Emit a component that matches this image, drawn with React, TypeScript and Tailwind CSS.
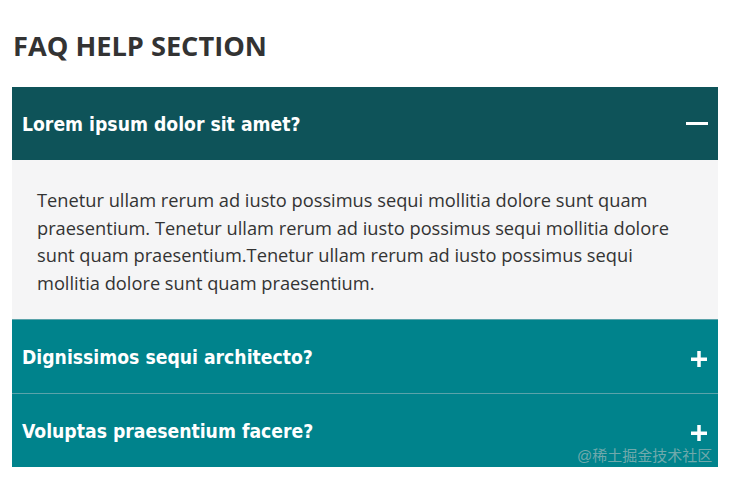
import React, { useState } from "react";

const items = [
  {
    q: "Lorem ipsum dolor sit amet?",
    a: "Tenetur ullam rerum ad iusto possimus sequi mollitia dolore sunt quam praesentium. Tenetur ullam rerum ad iusto possimus sequi mollitia dolore sunt quam praesentium.Tenetur ullam rerum ad iusto possimus sequi mollitia dolore sunt quam praesentium.",
  },
  { q: "Dignissimos sequi architecto?", a: "Tenetur ullam rerum ad iusto possimus sequi mollitia dolore sunt quam praesentium." },
  { q: "Voluptas praesentium facere?", a: "Tenetur ullam rerum ad iusto possimus sequi mollitia dolore sunt quam praesentium." },
];

export default function App() {
  const [open, setOpen] = useState(0);
  return (
    <div className="relative w-[730px] h-[481px] bg-white overflow-hidden">
      <div className="pl-[12px] pr-[12px] pt-[29px]">
        <h1 className="text-[27.2px] font-bold text-[#333333] leading-[34px] pl-[1px] mb-[24px]" style={{ fontFamily: '"Open Sans", sans-serif' }}>
          FAQ HELP SECTION
        </h1>
        <div className="flex flex-col">
          {items.map((it, i) => {
            const isOpen = open === i;
            return (
              <div key={i} className={i > 0 ? "border-t border-[#5aa3aa]" : ""}>
                <button
                  onClick={() => setOpen(isOpen ? -1 : i)}
                  className={`w-full h-[73px] flex items-center justify-between pl-[10px] pr-[10px] text-left text-white ${isOpen ? "bg-[#0e5359]" : "bg-[#00838c]"}`}
                >
                  <span className="text-[19.2px] font-bold pt-[4px]" style={{ fontFamily: '"DejaVu Sans Condensed", "DejaVu Sans", sans-serif' }}>
                    {it.q}
                  </span>
                  <span className="w-[22px] h-[22px] relative flex items-center justify-center">
                    {isOpen ? (
                      <span className="block w-[22px] h-[3px] bg-white" />
                    ) : (
                      <svg width="16" height="16" viewBox="0 0 16 16" className="ml-[4px] mt-[4px]">
                        <rect x="0" y="6.5" width="16" height="3.5" fill="#fff" />
                        <rect x="6.25" y="0" width="3.5" height="16" fill="#fff" />
                      </svg>
                    )}
                  </span>
                </button>
                {isOpen && (
                  <div className="bg-[#f5f5f6] pl-[25px] pr-[26px] pt-[26px] pb-[23px]">
                    <p className="text-[18.25px] leading-[27.5px] text-[#333333]" style={{ fontFamily: '"Open Sans", sans-serif' }}>
                      {it.a}
                    </p>
                  </div>
                )}
              </div>
            );
          })}
        </div>
      </div>
      <div
        className="absolute left-[577px] top-[445px] text-[15px] text-[rgba(190,195,195,0.6)] leading-[22px]"
        style={{ fontFamily: '"Liberation Sans", "Noto Sans CJK SC", sans-serif' }}
      >
        @稀土掘金技术社区
      </div>
    </div>
  );
}
